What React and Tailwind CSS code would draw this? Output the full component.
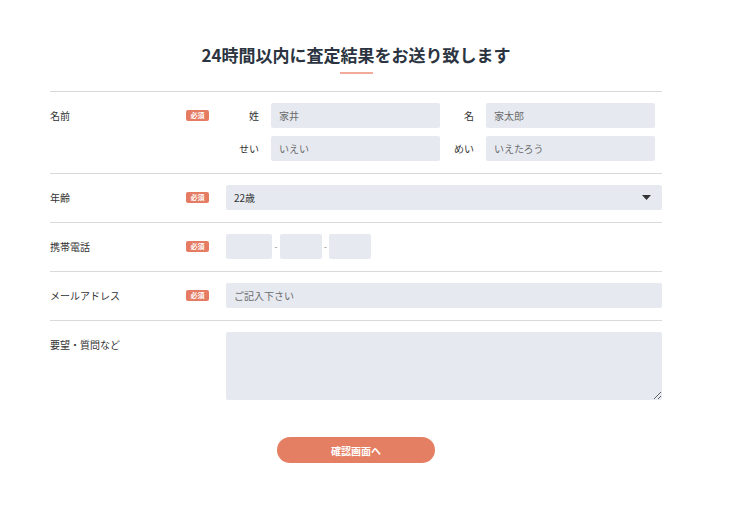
import React from "react";

const Badge = () => (
  <span className="inline-flex items-center justify-center w-[23px] h-[11px] rounded-[2px] bg-[#e57b63] text-white text-[7px] leading-none font-bold">必須</span>
);

const inputCls =
  "block h-[25px] rounded-[2px] bg-[#e6e9f0] px-[8px] text-[10px] text-[#333] placeholder:text-[#6b6b6b] outline-none border-0";

function Row({ label, required, children, last }) {
  return (
    <div className={`flex items-start pt-[11px] pb-[12px] ${last ? "" : "border-b border-[#d9d9d9]"}`}>
      <div className="w-[136px] h-[25px] flex items-center text-[10px] text-[#333]">{label}</div>
      <div className="w-[40px] h-[25px] flex items-center">{required && <Badge />}</div>
      <div className="flex-1">{children}</div>
    </div>
  );
}

export default function App() {
  return (
    <div className="w-[740px] h-[528px] bg-white" style={{ fontFamily: '"Noto Sans CJK JP", "Noto Sans", sans-serif' }}>
      <div className="ml-[50px] w-[612px]">
        <div className="pt-[43px] flex flex-col items-center">
          <h1 className="text-[17px] leading-[24px] font-bold text-[#2b3440]">24時間以内に査定結果をお送り致します</h1>
          <div className="mt-[5px] w-[33px] h-[2px] bg-[#f2aa9b]" />
        </div>
        <div className="mt-[17px] border-t border-[#d9d9d9]">
          <Row label="名前" required>
            <div className="grid grid-cols-[45px_169px_46px_169px] gap-y-[8px] items-center">
              <span className="text-[10px] text-[#333] text-right pr-[12px]">姓</span>
              <input className={inputCls} placeholder="家井" />
              <span className="text-[10px] text-[#333] text-right pr-[12px]">名</span>
              <input className={inputCls} placeholder="家太郎" />
              <span className="text-[10px] text-[#333] text-right pr-[12px]">せい</span>
              <input className={inputCls} placeholder="いえい" />
              <span className="text-[10px] text-[#333] text-right pr-[12px]">めい</span>
              <input className={inputCls} placeholder="いえたろう" />
            </div>
          </Row>
          <Row label="年齢" required>
            <div className="h-[25px] rounded-[2px] bg-[#e6e9f0] px-[8px] flex items-center justify-between text-[10px] text-[#333]">
              <span>22歳</span>
              <svg width="9" height="5" viewBox="0 0 9 5" className="mr-[3px]"><polygon points="0,0 9,0 4.5,5" fill="#333" /></svg>
            </div>
          </Row>
          <Row label="携帯電話" required>
            <div className="flex items-center">
              <input className={`${inputCls} w-[46px]`} />
              <span className="w-[8px] text-center text-[8px] text-[#666]">-</span>
              <input className={`${inputCls} w-[42px]`} />
              <span className="w-[7px] text-center text-[8px] text-[#666]">-</span>
              <input className={`${inputCls} w-[42px]`} />
            </div>
          </Row>
          <Row label="メールアドレス" required>
            <input className={`${inputCls} w-full`} placeholder="ご記入下さい" />
          </Row>
          <Row label="要望・質問など" last>
            <textarea className="block w-full h-[68px] rounded-[2px] bg-[#e6e9f0] outline-none border-0 p-[8px] text-[10px]" />
          </Row>
        </div>
        <div className="flex justify-center mt-[25px]">
          <button className="w-[158px] h-[26px] rounded-full bg-[#e57f63] text-white text-[10px] font-bold">確認画面へ</button>
        </div>
      </div>
    </div>
  );
}
